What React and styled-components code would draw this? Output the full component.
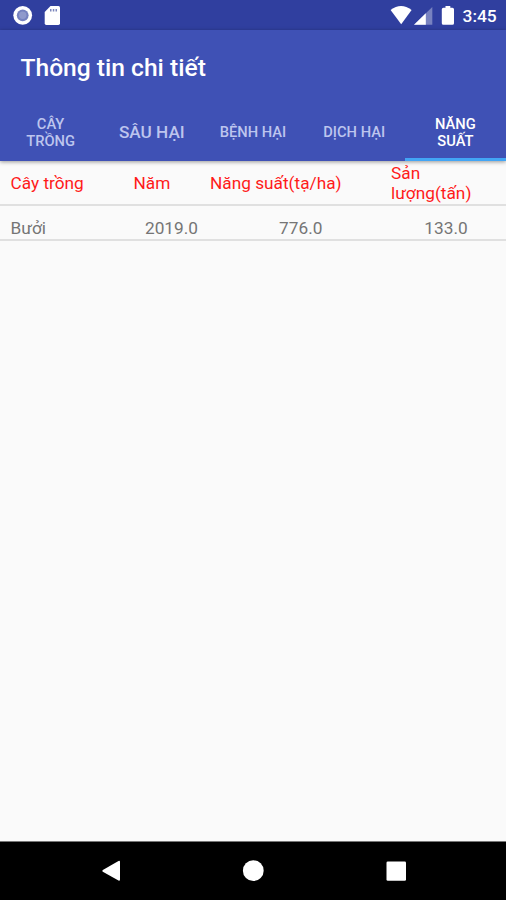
import React from "react";
import styled, { createGlobalStyle, css } from "styled-components";

const GlobalStyle = createGlobalStyle`
  * {
    box-sizing: border-box;
  }
  body {
    margin: 0;
    font-family: Roboto, "Noto Sans", sans-serif;
    background: #fafafa;
  }
`;
const Screen = styled.div`
  display: flex;
  flex-direction: column;
  width: 506px;
  height: 900px;
  overflow: hidden;
  background: #fafafa;
`;
const StatusBar = styled.div`
  display: flex;
  justify-content: space-between;
  height: 30px;
  flex: none;
  background: #303f9f;
  svg {
    display: block;
  }
`;
const StatusGroup = styled.div`
  display: flex;
`;
const Clock = styled.span`
  width: 44px;
  padding-left: 0.5px;
  color: #fff;
  font-size: 17.4px;
  font-weight: 500;
  line-height: 32px;
`;
const Header = styled.header`
  flex: none;
  background: #3f51b5;
  box-shadow: 0 1px 4px rgba(0, 0, 0, 0.4);
`;
const Title = styled.h1`
  margin: 0;
  padding-left: 20.5px;
  height: 73px;
  color: #fff;
  font-size: 24.6px;
  font-weight: 500;
  line-height: 75px;
`;
const Tabs = styled.nav`
  display: grid;
  grid-template-columns: repeat(5, 1fr);
  height: 58px;
`;
const Tab = styled.div`
  display: flex;
  align-items: center;
  justify-content: center;
  padding: 5px 10px 0;
  color: #bdc5ee;
  font-size: ${(props) => (props.$large ? "17.2px" : "14.7px")};
  font-weight: 500;
  line-height: 17.3px;
  text-align: center;
  white-space: pre-line;
  border-bottom: 3px solid transparent;
  ${(props) =>
    props.$active &&
    css`
      color: #fff;
      border-bottom-color: #42a5f5;
    `}
`;
const Row = styled.div`
  display: grid;
  flex: none;
  border-bottom: 2px solid #e0e0e0;
  font-size: 17.25px;
  line-height: 20px;
`;
const HeadRow = styled(Row)`
  grid-template-columns: 123px 76.5px 181px 1fr;
  align-items: center;
  height: 45px;
  padding-left: 10.5px;
  color: #ff1a1a;
  white-space: pre-line;
`;
const DataRow = styled(Row)`
  grid-template-columns: 96.5px 129px 129.5px 161px;
  height: 35px;
  padding: 12px 0 0 10.5px;
  color: #757575;
`;
const Value = styled.span`
  text-align: center;
`;
const NavBar = styled.div`
  flex: none;
  height: 59px;
  margin-top: auto;
  background: #000;
  border-top: 1px solid #777;
  svg {
    display: block;
  }
`;

const tabs = [
  { label: "CÂY\nTRỒNG" },
  { label: "SÂU HẠI", large: true },
  { label: "BỆNH HẠI" },
  { label: "DỊCH HẠI" },
  { label: "NĂNG\nSUẤT", active: true },
];
const columns = ["Cây trồng", "Năm", "Năng suất(tạ/ha)", "Sản\nlượng(tấn)"];
const rows = [{ name: "Bưởi", values: ["2019.0", "776.0", "133.0"] }];

function Status() {
  return (
    <StatusBar>
      <StatusGroup>
        <svg width="80" height="30" fill="#fff">
          <circle cx="22.7" cy="15.3" r="9.4" />
          <circle cx="22.7" cy="15.3" r="5.9" fill="#7581bf" />
          <circle cx="22.7" cy="15.3" r="3.7" fill="#8f99cc" />
          <path d="M50.5 6H58.5Q60 6 60 7.5V23.3Q60 25 58.3 25H46.3Q44.7 25 44.7 23.3V12Z" />
          <path d="M50 9h1.5v2.5H50zM52.8 9h1.5v2.5h-1.5zM55.5 9H57v2.5h-1.5z" fill="#7c86bc" />
        </svg>
      </StatusGroup>
      <StatusGroup>
        <svg width="72" height="30" fill="#fff">
          <path d="M0.6 10Q11 2 21.6 10L11.2 24.2Z" />
          <path d="M24 24.8L42.3 7V24.8Z" fill="#7882c0" />
          <path d="M24 24.8L35.8 13.3V24.8Z" />
          <path d="M55.5 6H60.3V7.7H62.4Q64 7.7 64 9.3V23.3Q64 24.8 62.4 24.8H53.4Q51.8 24.8 51.8 23.3V9.3Q51.8 7.7 53.4 7.7H55.5Z" />
        </svg>
        <Clock>3:45</Clock>
      </StatusGroup>
    </StatusBar>
  );
}

function SystemNav() {
  return (
    <NavBar>
      <svg width="506" height="58" fill="#fff">
        <path d="M102.8 27.9L118.5 19Q120 18.4 120 19.9V37.6Q120 39.3 118.5 38.5L102.8 29.7Q101.7 28.8 102.8 27.9Z" />
        <circle cx="253.3" cy="28.7" r="10.4" />
        <rect x="386.5" y="19.4" width="19.5" height="19.3" rx="1.3" />
      </svg>
    </NavBar>
  );
}

const App = () => {
  return (
    <Screen>
      <GlobalStyle />
      <Status />
      <Header>
        <Title>Thông tin chi tiết</Title>
        <Tabs>
          {tabs.map((tab) => (
            <Tab key={tab.label} $large={tab.large} $active={tab.active}>
              {tab.label}
            </Tab>
          ))}
        </Tabs>
      </Header>
      <HeadRow>
        {columns.map((column) => (
          <span key={column}>{column}</span>
        ))}
      </HeadRow>
      {rows.map((row) => (
        <DataRow key={row.name}>
          <span>{row.name}</span>
          {row.values.map((value) => (
            <Value key={value}>{value}</Value>
          ))}
        </DataRow>
      ))}
      <SystemNav />
    </Screen>
  );
};

export default App;
